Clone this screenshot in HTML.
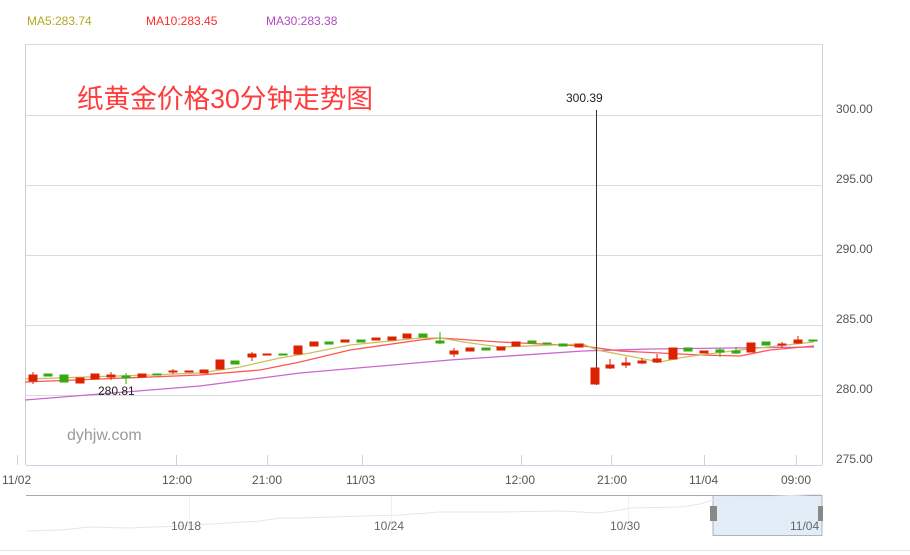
<!DOCTYPE html>
<html><head><meta charset="utf-8"><style>
body{margin:0;background:#fff;width:910px;height:555px;overflow:hidden;font-family:"Liberation Sans","Noto Sans CJK SC",sans-serif}
svg{display:block}
</style></head><body>
<svg width="910" height="555" viewBox="0 0 910 555" font-family="Liberation Sans, Noto Sans CJK SC, sans-serif">
<text x="27" y="25" font-size="12" fill="#b5a820">MA5:283.74</text>
<text x="146" y="25" font-size="12" fill="#ff2a2a">MA10:283.45</text>
<text x="266" y="25" font-size="12" fill="#b04cc0">MA30:283.38</text>
<g stroke="#d8dbe2" stroke-width="1">
<line x1="25" y1="44.5" x2="822" y2="44.5"/>
<line x1="25" y1="115.5" x2="822" y2="115.5"/>
<line x1="25" y1="185.5" x2="822" y2="185.5"/>
<line x1="25" y1="255.5" x2="822" y2="255.5"/>
<line x1="25" y1="325.5" x2="822" y2="325.5"/>
<line x1="25" y1="395.5" x2="822" y2="395.5"/>
</g>
<line x1="25.5" y1="44" x2="25.5" y2="465" stroke="#c8cdd8"/>
<line x1="822.5" y1="44" x2="822.5" y2="465" stroke="#c8d4e4"/>
<line x1="26" y1="465.5" x2="822" y2="465.5" stroke="#c8d4e4"/>
<g stroke="#c8d4e4"><line x1="17.5" y1="455" x2="17.5" y2="465"/><line x1="176.5" y1="455" x2="176.5" y2="465"/><line x1="267.5" y1="455" x2="267.5" y2="465"/><line x1="362.5" y1="455" x2="362.5" y2="465"/><line x1="521.5" y1="455" x2="521.5" y2="465"/><line x1="611.5" y1="455" x2="611.5" y2="465"/><line x1="704.5" y1="455" x2="704.5" y2="465"/><line x1="796.5" y1="455" x2="796.5" y2="465"/></g>
<g font-size="12" fill="#555">
<text x="836" y="113">300.00</text><text x="836" y="183">295.00</text><text x="836" y="253">290.00</text><text x="836" y="323">285.00</text><text x="836" y="393">280.00</text><text x="836" y="463">275.00</text>
<text x="2" y="484">11/02</text><text x="162" y="484">12:00</text><text x="252" y="484">21:00</text><text x="346" y="484">11/03</text><text x="505" y="484">12:00</text><text x="597" y="484">21:00</text><text x="689" y="484">11/04</text><text x="781" y="484">09:00</text>
</g>
<text x="77" y="108" font-size="26.5" fill="#ff3b3b" textLength="296" lengthAdjust="spacingAndGlyphs">纸黄金价格30分钟走势图</text>
<text x="67" y="440" font-size="16" fill="#9a9a9a">dyhjw.com</text>
<polyline fill="none" stroke="#cc66cc" stroke-width="1.3" points="25,400 200,386 300,373 450,360 583,351 650,349 814,347"/>
<polyline fill="none" stroke="#ff5555" stroke-width="1.3" points="25,382 200,375 260,370 300,362 350,350 420,340 440,338 500,342 583,346 620,351 700,355 740,356 770,350 814,346"/>
<polyline fill="none" stroke="#c8c060" stroke-width="1.3" points="25,379 150,375 200,373 240,367 280,358 310,353 350,345 420,338 440,338 470,343 500,347 583,344 597,350 660,362 685,357 740,350 814,342"/>
<line x1="596.5" y1="110" x2="596.5" y2="385" stroke="#333"/>
<text x="566" y="102" font-size="12" fill="#222">300.39</text>
<text x="98" y="395" font-size="12" fill="#222">280.81</text>
<g fill="#dd2200" stroke="#dd2200">
<rect x="29" y="375" width="8" height="6"/><rect x="76" y="378" width="8" height="5"/><rect x="91" y="374" width="8" height="5"/><rect x="107" y="375" width="8" height="2"/><rect x="138" y="374" width="8" height="3"/><rect x="169" y="371" width="8" height="1"/><rect x="185" y="371" width="8" height="1"/><rect x="200" y="370" width="8" height="3"/><rect x="216" y="360" width="8" height="9"/><rect x="248" y="354" width="8" height="3"/><rect x="263" y="354" width="8" height="1"/><rect x="294" y="346" width="8" height="8"/><rect x="310" y="342" width="8" height="4"/><rect x="341" y="340" width="8" height="2"/><rect x="372" y="338" width="8" height="2"/><rect x="388" y="337" width="8" height="3"/><rect x="403" y="334" width="8" height="4"/>
<rect x="450" y="351" width="8" height="3"/><rect x="466" y="348" width="8" height="3"/><rect x="497" y="347" width="8" height="3"/><rect x="512" y="342" width="8" height="4"/><rect x="575" y="344" width="8" height="3"/><rect x="591" y="368" width="8" height="16"/><rect x="606" y="365" width="8" height="3"/><rect x="622" y="363" width="8" height="2"/><rect x="638" y="361" width="8" height="2"/><rect x="653" y="359" width="8" height="3"/><rect x="669" y="348" width="8" height="11"/><rect x="700" y="351" width="8" height="2"/><rect x="747" y="343" width="8" height="9"/><rect x="778" y="344" width="8" height="1"/><rect x="794" y="340" width="8" height="3"/>
</g>
<g stroke="#dd2200"><line x1="33" y1="372" x2="33" y2="384"/><line x1="111" y1="372" x2="111" y2="380"/><line x1="173" y1="369" x2="173" y2="374"/><line x1="252" y1="352" x2="252" y2="361"/><line x1="454" y1="348" x2="454" y2="357"/><line x1="610" y1="359" x2="610" y2="369"/><line x1="626" y1="357" x2="626" y2="368"/><line x1="642" y1="358" x2="642" y2="364"/><line x1="657" y1="354" x2="657" y2="363"/><line x1="782" y1="342" x2="782" y2="348"/><line x1="798" y1="336" x2="798" y2="344"/></g>
<g fill="#33aa11" stroke="#33aa11">
<rect x="44" y="374" width="8" height="2"/><rect x="60" y="375" width="8" height="7"/><rect x="122" y="376" width="8" height="2"/><rect x="153" y="374" width="8" height="1"/><rect x="231" y="361" width="8" height="3"/><rect x="279" y="354" width="8" height="1"/><rect x="325" y="342" width="8" height="2"/><rect x="357" y="340" width="8" height="2"/><rect x="419" y="334" width="8" height="3"/><rect x="436" y="341" width="8" height="2"/><rect x="482" y="348" width="8" height="2"/><rect x="528" y="341" width="8" height="2"/><rect x="543" y="343" width="8" height="1"/><rect x="559" y="344" width="8" height="2"/><rect x="684" y="348" width="8" height="3"/><rect x="716" y="350" width="8" height="2"/><rect x="732" y="351" width="8" height="2"/><rect x="762" y="342" width="8" height="3"/><rect x="809" y="340" width="8" height="1"/>
</g>
<g stroke="#33aa11"><line x1="126" y1="373" x2="126" y2="384"/><line x1="440" y1="332" x2="440" y2="344"/><line x1="720" y1="348" x2="720" y2="357"/><line x1="736" y1="347" x2="736" y2="354"/></g>
<line x1="26" y1="495.5" x2="822" y2="495.5" stroke="#aaa"/>
<rect x="713" y="495.5" width="109" height="40" fill="#e3edf8" stroke="#9aa4b4" stroke-width="0.8"/>
<polyline fill="none" stroke="#e2e8f1" stroke-width="1" points="27,531 60,530 90,527 130,528 180,526 260,521 280,518 300,518 400,515 440,512 500,512 560,511 600,513 620,510 630,508 680,507 700,504 713,500 740,497 760,497 822,494"/>
<g stroke="#eef0f3"><line x1="189.5" y1="496" x2="189.5" y2="535"/><line x1="391.5" y1="496" x2="391.5" y2="535"/><line x1="628.5" y1="496" x2="628.5" y2="535"/></g>
<g font-size="12" fill="#666"><text x="171" y="530">10/18</text><text x="374" y="530">10/24</text><text x="610" y="530">10/30</text><text x="790" y="530">11/04</text></g>
<rect x="710" y="506" width="7" height="15" fill="#888"/>
<rect x="818" y="506" width="5" height="15" fill="#888"/>
<line x1="0" y1="550.5" x2="910" y2="550.5" stroke="#e2e2e2"/>
</svg>
</body></html>
